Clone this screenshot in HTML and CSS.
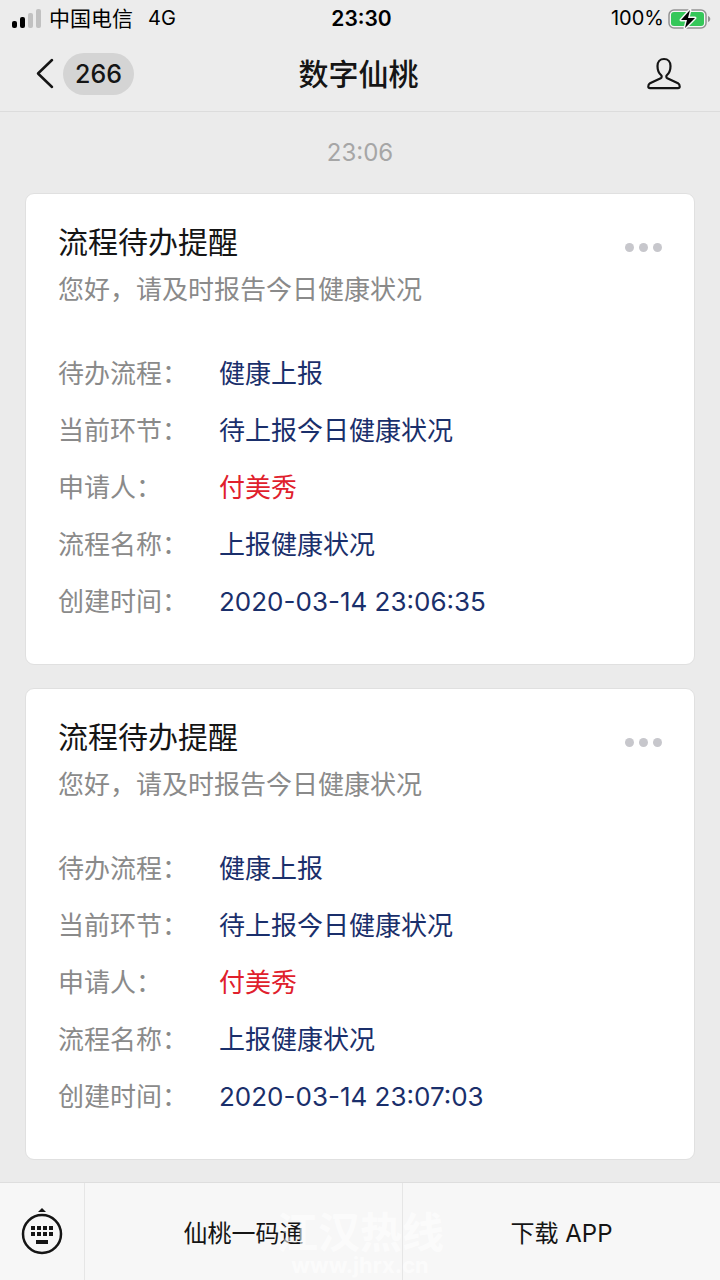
FILE: index.html
```html
<!DOCTYPE html>
<html lang="zh-CN">
<head>
    <meta charset="UTF-8">
    <meta name="viewport" content="width=device-width, initial-scale=1.0">
    <title>数字仙桃</title>
    <link rel="stylesheet" href="styles.css">
</head>
<body>

    <header class="header">
        <div class="status-bar">
            <div class="carrier">
                <svg class="signal" width="30" height="20" viewBox="0 0 30 20" aria-hidden="true">
                    <rect x="0" y="12" width="5" height="7" rx="2"/>
                    <rect x="8" y="8" width="5" height="11" rx="2"/>
                    <rect x="16" y="4" width="5" height="15" rx="2" fill="#c1c1c1"/>
                    <rect x="24" y="0" width="5" height="19" rx="2" fill="#c1c1c1"/>
                </svg>
                <span class="operator">中国电信</span>
                <span class="network">4G</span>
            </div>
            <div class="clock">23:30</div>
            <div class="power">
                <span>100%</span>
                <svg width="43" height="22" viewBox="0 0 43 22" aria-hidden="true">
                    <rect x="1" y="2" width="37" height="18" rx="5" fill="#f6f6f6" stroke="#929292" stroke-width="1.5"/>
                    <rect x="3" y="4" width="33" height="14" rx="3" fill="#35c759"/>
                    <path d="M40 8c3 1 3 5 0 6z" fill="#929292"/>
                    <path d="M22 2L13 12h6l-2 8 10-10h-7z" fill="#000" stroke="#f6f6f6" stroke-width="3" paint-order="stroke" stroke-linejoin="round"/>
                </svg>
            </div>
        </div>
        <nav class="nav-bar">
            <button class="back" type="button" aria-label="返回">
                <svg width="18" height="32" viewBox="0 0 18 32" fill="none" stroke="#151515" stroke-width="2.5" stroke-linecap="round" stroke-linejoin="round" aria-hidden="true">
                    <path d="M16 2L2 15.500l14 13.500"/>
                </svg>
                <span class="unread">266</span>
            </button>
            <h1 class="nav-title">数字仙桃</h1>
            <button class="profile" type="button" aria-label="公众号资料">
                <svg width="34" height="34" viewBox="0 0 34 34" fill="none" stroke="#151515" stroke-width="2.200" stroke-linejoin="round" aria-hidden="true">
                    <path d="M17 2c-4 0-6.500 3-6.500 7 0 3.500 1.200 7 3.500 9 .9.800 1 2.500-.3 3.200L3 26.300c-1.300.7-1.700 1.600-1.700 3.200 0 1.200.5 1.700 1.700 1.700h28c1.200 0 1.700-.5 1.700-1.700 0-1.600-.4-2.500-1.700-3.200l-10.700-5.100c-1.300-.7-1.200-2.400-.3-3.200 2.300-2 3.500-5.500 3.500-9 0-4-2.500-7-6.500-7z"/>
                </svg>
            </button>
        </nav>
    </header>

    <main class="messages">
        <time class="chat-time">23:06</time>

        <article class="card">
            <div class="card-head">
                <h2 class="card-title">流程待办提醒</h2>
                <button class="more" type="button" aria-label="更多"><i></i><i></i><i></i></button>
            </div>
            <p class="card-note">您好，请及时报告今日健康状况</p>
            <dl class="details">
                <dt>待办流程：</dt><dd>健康上报</dd>
                <dt>当前环节：</dt><dd>待上报今日健康状况</dd>
                <dt>申请人：</dt><dd class="applicant">付美秀</dd>
                <dt>流程名称：</dt><dd>上报健康状况</dd>
                <dt>创建时间：</dt><dd>2020-03-14 23:06:35</dd>
            </dl>
        </article>

        <article class="card">
            <div class="card-head">
                <h2 class="card-title">流程待办提醒</h2>
                <button class="more" type="button" aria-label="更多"><i></i><i></i><i></i></button>
            </div>
            <p class="card-note">您好，请及时报告今日健康状况</p>
            <dl class="details">
                <dt>待办流程：</dt><dd>健康上报</dd>
                <dt>当前环节：</dt><dd>待上报今日健康状况</dd>
                <dt>申请人：</dt><dd class="applicant">付美秀</dd>
                <dt>流程名称：</dt><dd>上报健康状况</dd>
                <dt>创建时间：</dt><dd>2020-03-14 23:07:03</dd>
            </dl>
        </article>
    </main>

    <footer class="menu-bar">
        <button class="keyboard" type="button" aria-label="键盘">
            <svg width="42" height="48" viewBox="0 0 42 48" fill="#151515" aria-hidden="true">
                <path d="M21 0l4 4h-8z"/>
                <circle cx="21" cy="26" r="19" fill="none" stroke="#151515" stroke-width="2.500"/>
                <path d="M10 18h4v4h-4zM16 18h4v4h-4zM22 18h4v4h-4zM28 18h4v4h-4zM10 24h4v4h-4zM16 24h4v4h-4zM22 24h4v4h-4zM28 24h4v4h-4zM15 32h12v4H15z"/>
            </svg>
        </button>
        <button class="menu-item" type="button">仙桃一码通</button>
        <button class="menu-item" type="button">下载 APP</button>
        <div class="watermark">
            <span class="watermark-name">江汉热线</span>
            <span class="watermark-url">www.jhrx.cn</span>
        </div>
    </footer>

</body>
</html>
```
FILE: styles.css
```css
* { margin: 0; padding: 0; box-sizing: border-box; }

body {
    display: flex;
    flex-direction: column;
    min-height: 100vh;
    background: #ebebeb;
    color: #151515;
    font-family: Inter, "Noto Sans CJK SC", sans-serif;
}

button { border: none; background: none; color: inherit; font: inherit; cursor: pointer; }
svg { display: block; }

/* header */
.header { background: #ececec; border-bottom: 1px solid #dcdcdc; }

.status-bar {
    display: grid;
    grid-template-columns: 1fr auto 1fr;
    align-items: center;
    height: 37px;
    padding: 0 9px 0 12px;
    color: #000;
    font-size: 20px;
    line-height: 37px;
}
.carrier { display: flex; align-items: center; gap: 7px; }
.operator { font-size: 21px; }
.network { margin-left: 8px; }
.clock { font-size: 21px; font-weight: 600; }
.power { display: flex; align-items: center; justify-content: flex-end; gap: 4px; }

.nav-bar {
    display: grid;
    grid-template-columns: 1fr auto 1fr;
    align-items: center;
    height: 74px;
    padding: 0 39px 0 36px;
}
.back { display: flex; align-items: center; gap: 9px; justify-self: start; }
.unread {
    padding: 0 12px;
    border-radius: 21px;
    background: #d4d4d4;
    font-size: 25px;
    font-weight: 500;
    line-height: 42px;
}
.nav-title { font-size: 30px; font-weight: 500; line-height: 44px; }
.profile { justify-self: end; }

/* messages */
.messages {
    display: flex;
    flex: 1;
    flex-direction: column;
    gap: 23px;
    padding: 24px 25px 22px;
}
.chat-time { color: #a6a6a6; font-size: 24px; line-height: 34px; text-align: center; }

.card {
    padding: 28px 32px 34px;
    border: 1px solid #e0e0e0;
    border-radius: 9px;
    background: #fff;
}
.card-head { display: flex; align-items: center; justify-content: space-between; }
.card-title { font-size: 30px; font-weight: 400; line-height: 40px; }
.more { display: flex; gap: 5px; padding-top: 10px; }
.more i { width: 9px; height: 9px; border-radius: 50%; background: #c7c7cc; }
.card-note { margin-top: 8px; color: #8a8a8a; font-size: 26px; line-height: 40px; }

.details {
    display: grid;
    grid-template-columns: 161px 1fr;
    margin-top: 35px;
    font-size: 26px;
    line-height: 57px;
}
.details dt { color: #8a8a8a; }
.details dd { color: #1a2f6b; }
.details .applicant { color: #e0202c; }

/* bottom menu */
.menu-bar {
    position: relative;
    display: grid;
    grid-template-columns: 84px 1fr 1fr;
    height: 98px;
    border-top: 1px solid #dedede;
    background: #f7f7f7;
}
.menu-bar button + button { border-left: 1px solid #e6e6e6; }
.keyboard { display: flex; align-items: center; justify-content: center; }
.menu-item { font-size: 24px; }

.watermark {
    position: absolute;
    top: 28px;
    left: 50%;
    display: flex;
    flex-direction: column;
    align-items: center;
    transform: translateX(-50%);
    color: rgba(255, 255, 255, 0.6);
    font-weight: 700;
    pointer-events: none;
}
.watermark-name { font-size: 42px; line-height: 44px; }
.watermark-url { font-size: 22px; line-height: 20px; }
```
